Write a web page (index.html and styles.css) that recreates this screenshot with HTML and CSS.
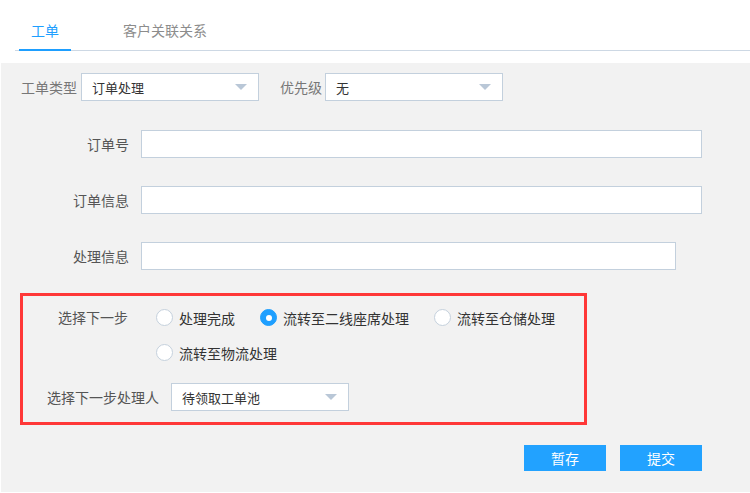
FILE: index.html
```html
<!DOCTYPE html>
<html lang="zh-CN">
<head>
<meta charset="utf-8">
<title>工单</title>
<link rel="stylesheet" href="styles.css">
</head>
<body>
<div class="tabs">
  <div class="tab active">工单</div>
  <div class="tab">客户关联关系</div>
</div>
<div class="panel">
  <div class="top-row">
    <span class="top-label">工单类型</span>
    <div class="select"><span>订单处理</span><i class="arrow"></i></div>
    <span class="top-label second">优先级</span>
    <div class="select"><span>无</span><i class="arrow"></i></div>
  </div>
  <div class="field first">
    <label class="field-label">订单号</label>
    <div class="input wide"></div>
  </div>
  <div class="field">
    <label class="field-label">订单信息</label>
    <div class="input wide"></div>
  </div>
  <div class="field">
    <label class="field-label">处理信息</label>
    <div class="input narrow"></div>
  </div>
  <div class="highlight">
    <div class="step-row">
      <span class="step-label">选择下一步</span>
      <div class="radios">
        <div class="radio"><span class="dot"></span><span>处理完成</span></div>
        <div class="radio"><span class="dot checked"></span><span>流转至二线座席处理</span></div>
        <div class="radio"><span class="dot"></span><span>流转至仓储处理</span></div>
        <div class="radio"><span class="dot"></span><span>流转至物流处理</span></div>
      </div>
    </div>
    <div class="handler-row">
      <span class="handler-label">选择下一步处理人</span>
      <div class="select"><span>待领取工单池</span><i class="arrow"></i></div>
    </div>
  </div>
  <div class="actions">
    <button class="btn">暂存</button>
    <button class="btn">提交</button>
  </div>
</div>
</body>
</html>
```
FILE: styles.css
```css
* { box-sizing: border-box; }
html, body { margin: 0; padding: 0; background: #fff; }
body {
  font-family: "Noto Sans CJK SC", "Noto Sans", sans-serif;
  font-size: 14px;
  color: #333;
  width: 750px;
  height: 493px;
  overflow: hidden;
}
.tabs {
  display: flex;
  align-items: flex-start;
  margin-left: 15px;
  height: 51px;
  border-bottom: 1px solid #cdd8e4;
}
.tab {
  box-sizing: content-box;
  height: 29px;
  padding: 20px 12px 0;
  line-height: 20px;
  color: #8c8c8c;
  border-bottom: 2px solid transparent;
  margin-bottom: -1px;
}
.tab:first-child { margin-left: 4px; }
.tab + .tab { margin-left: 40px; }
.tab.active { color: #1e9fff; border-bottom-color: #1e9fff; }

.panel {
  margin: 12px 0 0 1px;
  height: 429px;
  background: #f2f2f2;
  padding: 10px 48px 0 19px;
}
.top-row { display: flex; align-items: center; height: 28px; padding-left: 1px; }
.top-label { color: #777; line-height: 28px; margin-right: 4px; }
.top-label.second { margin-left: 21px; margin-right: 3px; }
.select {
  width: 178px;
  height: 28px;
  background: #fff;
  border: 1px solid #c3d0dd;
  display: flex;
  align-items: center;
  justify-content: space-between;
  padding: 0 11px 0 10px;
  font-size: 13px;
  color: #333;
}
.arrow {
  width: 0; height: 0;
  border-top: 6px solid #b9c7d7;
  border-left: 6px solid transparent;
  border-right: 6px solid transparent;
}
.field { display: flex; align-items: center; margin-top: 28px; height: 28px; }
.field.first { margin-top: 29px; }
.field-label { width: 109px; text-align: right; margin-right: 12px; color: #555; }
.input { height: 28px; background: #fff; border: 1px solid #c3d0dd; }
.input.wide { width: 561px; }
.input.narrow { width: 535px; }

.highlight {
  margin-top: 23px;
  width: 567px;
  border: 3px solid #ff3838;
  padding: 4px 0 11px 0;
}
.step-row { display: flex; align-items: flex-start; }
.step-label {
  width: 105px;
  text-align: right;
  margin-right: 28px;
  line-height: 35px;
  color: #555;
}
.radios { display: flex; flex-wrap: wrap; column-gap: 25px; width: 428px; }
.radio { display: flex; align-items: center; height: 35px; gap: 6px; color: #333; }
.dot {
  width: 17px; height: 17px;
  border-radius: 50%;
  border: 1px solid #c5d1dd;
  background: #fff;
  display: flex; align-items: center; justify-content: center;
}
.dot.checked { background: #1e9fff; border-color: #1e9fff; }
.dot.checked::after {
  content: "";
  width: 6px; height: 6px;
  border-radius: 50%;
  background: #fff;
}
.handler-row { display: flex; align-items: center; margin-top: 13px; padding-left: 24px; }
.handler-label { margin-right: 12px; color: #555; }

.actions { display: flex; justify-content: flex-end; gap: 14px; margin-top: 20px; }
.btn {
  width: 82px; height: 26px;
  border: 0;
  background: #22a2ff;
  color: #fff;
  font-family: "Noto Sans CJK SC", "Noto Sans", sans-serif;
  font-size: 14px;
  padding: 0;
  line-height: 26px;
}
```
